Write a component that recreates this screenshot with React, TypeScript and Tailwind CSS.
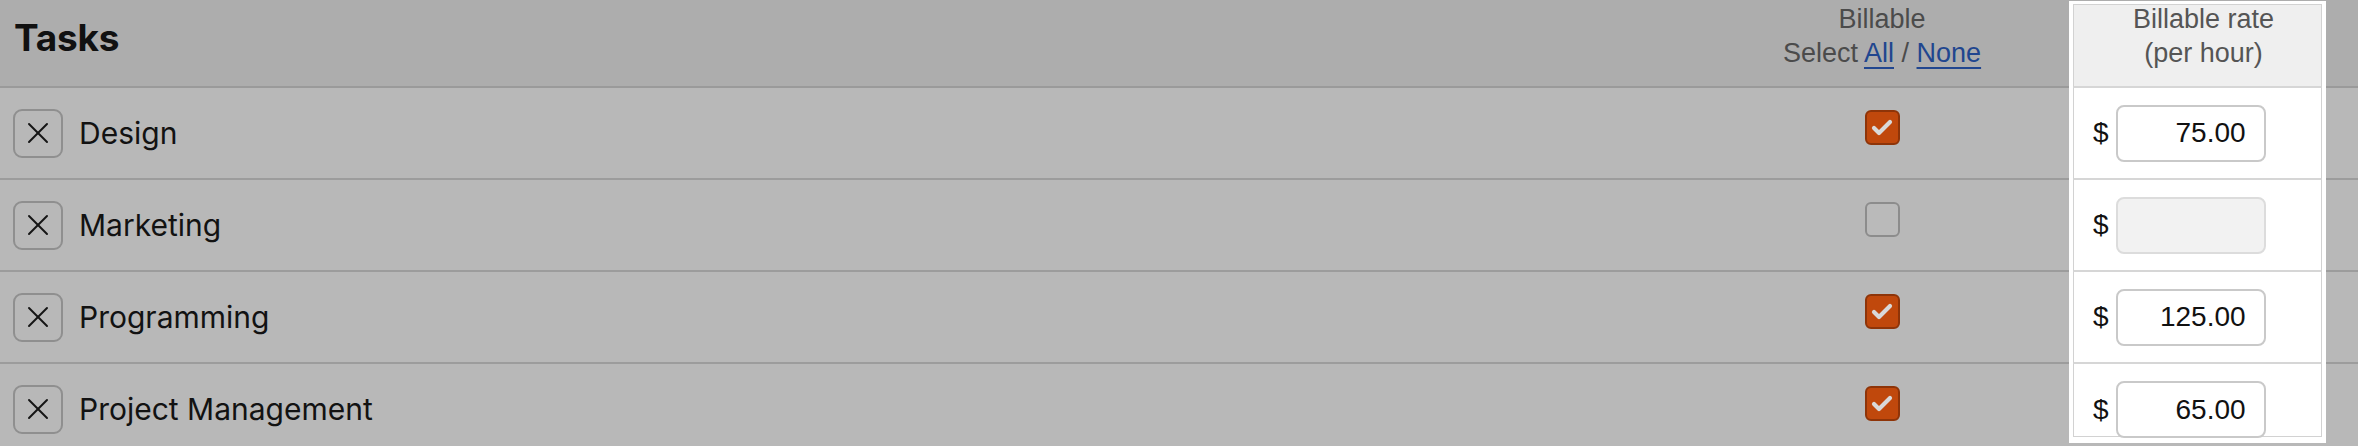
import { Check, X } from "lucide-react";

type Task = { name: string; billable: boolean; rate: string };

const tasks: Task[] = [
  { name: "Design", billable: true, rate: "75.00" },
  { name: "Marketing", billable: false, rate: "" },
  { name: "Programming", billable: true, rate: "125.00" },
  { name: "Project Management", billable: true, rate: "65.00" },
];

const sans = "font-['Liberation_Sans',Arial,sans-serif]";
const inter = "font-['Inter','Noto_Sans',sans-serif]";

function Checkbox({ checked }: { checked: boolean }) {
  if (checked) {
    return (
      <div className="mb-[11px] flex h-[35px] w-[35px] items-center justify-center rounded-[6px] border-2 border-[#8e3408] bg-[#c0480c]">
        <Check size={24} strokeWidth={4.2} className="text-[#d9d9d9]" />
      </div>
    );
  }
  return <div className="mb-[11px] h-[35px] w-[35px] rounded-[6px] border-2 border-[#8c8c8c] bg-[#bababa]" />;
}

function RateCell({ rate, disabled, last }: { rate: string; disabled: boolean; last: boolean }) {
  return (
    <div
      className={
        last
          ? "h-[79px] w-[257px] self-start border-x-4 border-b-[6px] border-white bg-white"
          : "w-[257px] border-x-4 border-white bg-white"
      }
    >
      <div
        className={
          last
            ? "h-full border-x border-b border-[#d2d2d2] pt-[17px] pl-[19px]"
            : "flex h-full items-center border-x border-b-2 border-x-[#d2d2d2] border-b-[#d6d6d6] pl-[19px]"
        }
      >
        <div className="flex items-center gap-[7px]">
          <span className={`${sans} text-[28px] leading-none text-[#111]`}>$</span>
          <input
            readOnly
            disabled={disabled}
            value={rate}
            className={
              disabled
                ? `${sans} h-[57px] w-[150px] rounded-[8px] border-2 border-[#dcdcdc] bg-[#f2f2f2] px-[18px] text-right text-[28px]`
                : `${sans} h-[57px] w-[150px] rounded-[8px] border-2 border-[#c9c9c9] bg-white px-[18px] text-right text-[28px] text-[#111]`
            }
          />
        </div>
      </div>
    </div>
  );
}

function TaskRow({ task, last }: { task: Task; last: boolean }) {
  return (
    <div className="flex h-[92px]">
      <div className="flex flex-1 items-center gap-4 border-b-2 border-[#9c9c9c] pl-[13px]">
        <button className="flex h-[49px] w-[50px] items-center justify-center rounded-[9px] border-2 border-[#8f8f8f]">
          <X size={36} strokeWidth={1.3} className="text-[#151515]" />
        </button>
        <span className={`${inter} text-[30px] text-[#121212]`}>{task.name}</span>
      </div>
      <div className="flex w-[374px] items-center justify-center border-b-2 border-[#9c9c9c]">
        <Checkbox checked={task.billable} />
      </div>
      <RateCell rate={task.rate} disabled={!task.billable} last={last} />
      <div className={last ? "w-[32px]" : "w-[32px] border-b-2 border-[#9c9c9c]"} />
    </div>
  );
}

export default function App() {
  return (
    <div className="h-[446px] w-[2358px] overflow-hidden bg-[#b8b8b8]">
      <div className="flex h-[88px] bg-[#adadad]">
        <div className="flex-1 border-b-2 border-[#9a9a9a] pt-[14px] pl-[14px]">
          <h1 className={`${inter} text-[37px] leading-[48px] font-bold tracking-[-0.2px] text-[#111]`}>Tasks</h1>
        </div>
        <div
          className={`${sans} w-[374px] border-b-2 border-[#9a9a9a] pt-[2px] text-center text-[27px] leading-[34px] text-[#4b4b4b]`}
        >
          <div>Billable</div>
          <div>
            Select{" "}
            <a className="text-[#21468f] underline decoration-2 underline-offset-[5px]">All</a> /{" "}
            <a className="text-[#21468f] underline decoration-2 underline-offset-[5px]">None</a>
          </div>
        </div>
        <div className="mt-px w-[257px] border-x-4 border-t-[3px] border-white bg-white">
          <div
            className={`${sans} h-full border-x border-t border-b-2 border-x-[#d2d2d2] border-t-[#d2d2d2] border-b-[#d6d6d6] bg-[#efefef] pl-[12px] text-center text-[27px] leading-[34px] text-[#555]`}
          >
            <div className="-mt-[3px]">Billable rate</div>
            <div>(per hour)</div>
          </div>
        </div>
        <div className="w-[32px] border-b-2 border-[#9a9a9a]" />
      </div>
      {tasks.map((t, i) => (
        <TaskRow key={t.name} task={t} last={i === tasks.length - 1} />
      ))}
    </div>
  );
}
